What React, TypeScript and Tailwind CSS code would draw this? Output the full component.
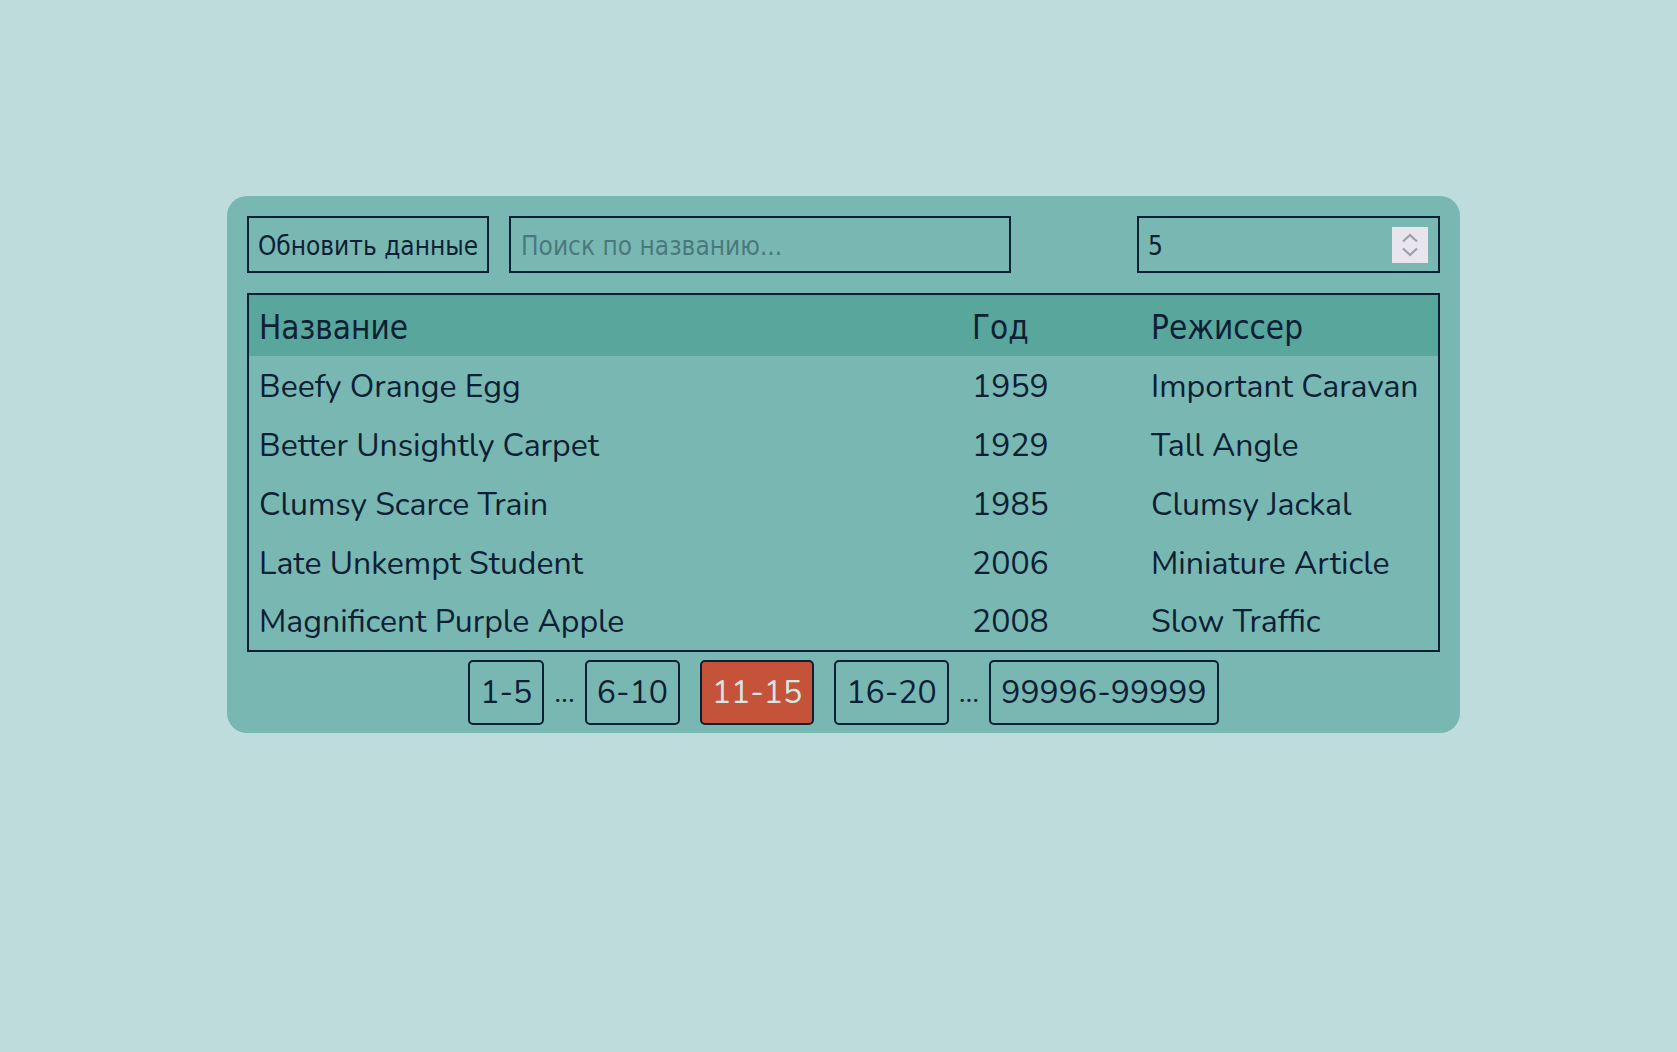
import { useState } from 'react';

interface Movie {
  title: string;
  year: number;
  director: string;
}

const movies: Movie[] = [
  { title: 'Beefy Orange Egg', year: 1959, director: 'Important Caravan' },
  { title: 'Better Unsightly Carpet', year: 1929, director: 'Tall Angle' },
  { title: 'Clumsy Scarce Train', year: 1985, director: 'Clumsy Jackal' },
  { title: 'Late Unkempt Student', year: 2006, director: 'Miniature Article' },
  { title: 'Magnificent Purple Apple', year: 2008, director: 'Slow Traffic' },
];

const tahoma = "font-['Tahoma','DejaVu_Sans_Condensed','DejaVu_Sans',sans-serif]";
const rounded = "font-['Nunito','Lato','Noto_Sans',sans-serif]";

function PageButton({ label, active }: { label: string; active?: boolean }) {
  return (
    <button
      className={`mx-[10px] h-[65px] px-[10px] rounded-[5px] border-2 border-solid border-[#0d1f35] text-[32px] leading-none ${
        active ? 'bg-[#c4533a] text-[#d6e6e4]' : 'bg-transparent text-[#0d1f35]'
      }`}
    >
      {label}
    </button>
  );
}

function App() {
  const [search, setSearch] = useState('');
  const [perPage] = useState(5);

  return (
    <div className="min-h-screen w-full bg-[#bedcdc] pt-[196px] pl-[227px]">
      <div className="w-[1233px] bg-[#79b8b2] rounded-[20px] px-5 pt-5 pb-2">
        <div className={`flex items-center ${tahoma} text-[26px] text-[#0d1f35]`}>
          <button className="h-[57px] w-[242px] pt-[3px] border-2 border-solid border-[#0d1f35] bg-transparent">
            Обновить данные
          </button>
          <input
            type="text"
            value={search}
            onChange={(e) => setSearch(e.target.value)}
            placeholder="Поиск по названию..."
            className="ml-5 h-[57px] w-[502px] pt-[3px] px-[10px] border-2 border-solid border-[#0d1f35] bg-transparent placeholder:text-[#4b787d] focus:outline-none"
          />
          <div className="ml-auto h-[57px] w-[303px] flex items-center justify-between pl-[9px] pr-[10px] border-2 border-solid border-[#0d1f35]">
            <span className="pt-[3px]">{perPage}</span>
            <div className="w-[36px] h-[36px] bg-[#e8e6ec] flex flex-col items-center justify-center gap-[4px]">
              <svg width="18" height="10" viewBox="0 0 18 10" fill="none">
                <path d="M2 8.5 L9 2 L16 8.5" stroke="#a19ca9" strokeWidth="2.2" />
              </svg>
              <svg width="18" height="10" viewBox="0 0 18 10" fill="none">
                <path d="M2 1.5 L9 8 L16 1.5" stroke="#a19ca9" strokeWidth="2.2" />
              </svg>
            </div>
          </div>
        </div>

        <table className="mt-5 w-full border-2 border-solid border-[#0d1f35] border-collapse text-[#0d1f35]">
          <thead>
            <tr className={`bg-[#58a69c] h-[62px] ${tahoma} text-[33px]`}>
              <th className="text-left font-normal pl-[10px] pt-[5px] w-[714px]">Название</th>
              <th className="text-left font-normal pl-[10px] pt-[5px] w-[179px]">Год</th>
              <th className="text-left font-normal pl-[10px] pt-[5px]">Режиссер</th>
            </tr>
          </thead>
          <tbody className={`${rounded} text-[32px]`}>
            {movies.map((m) => (
              <tr key={m.title} className="h-[59px]">
                <td className="pl-[10px] pt-[2px]">{m.title}</td>
                <td className="pl-[10px] pt-[2px]">{m.year}</td>
                <td className="pl-[10px] pt-[2px]">{m.director}</td>
              </tr>
            ))}
          </tbody>
        </table>

        <div className={`mt-2 flex items-center justify-center ${rounded} text-[#0d1f35]`}>
          <PageButton label="1-5" />
          <span className="text-[30px]">...</span>
          <PageButton label="6-10" />
          <PageButton label="11-15" active />
          <PageButton label="16-20" />
          <span className="text-[30px]">...</span>
          <PageButton label="99996-99999" />
        </div>
      </div>
    </div>
  );
}

export default App;
